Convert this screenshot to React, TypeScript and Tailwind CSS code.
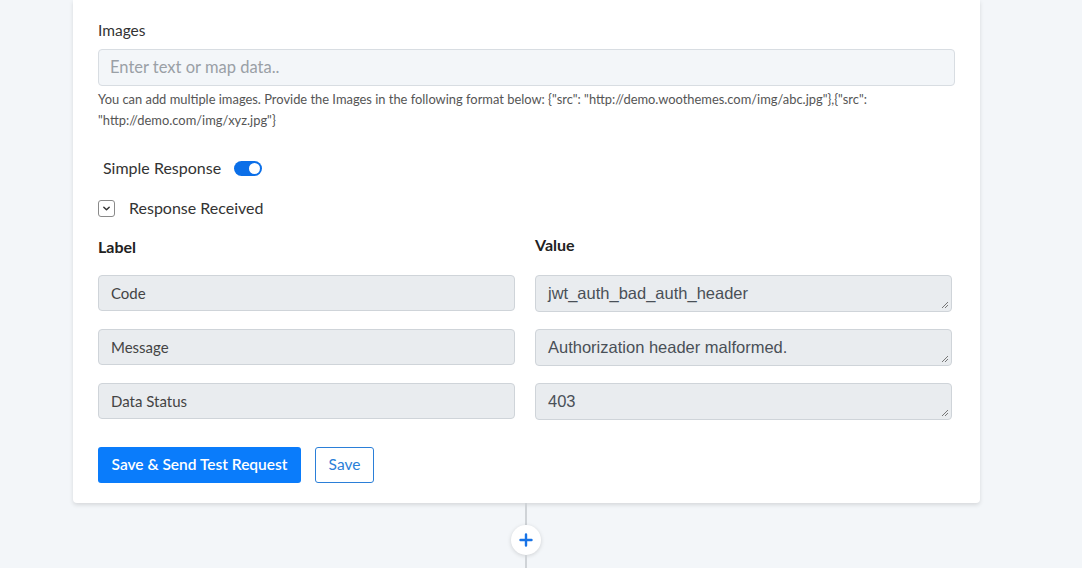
import React from "react";

const sans = { fontFamily: "Lato, 'Open Sans', sans-serif" };

function Toggle() {
  return (
    <div className="relative w-[28px] h-[15px] rounded-full bg-[#0b6fe8]">
      <div className="absolute right-[2px] top-[2px] w-[11px] h-[11px] rounded-full bg-white" />
    </div>
  );
}

function Grip() {
  return (
    <svg className="absolute right-[2px] bottom-[2px]" width="8" height="8" viewBox="0 0 8 8">
      <path d="M7 1 L1 7 M7 4 L4 7" stroke="#777" strokeWidth="1" fill="none" />
    </svg>
  );
}

const rows = [
  ["Code", "jwt_auth_bad_auth_header"],
  ["Message", "Authorization header malformed."],
  ["Data Status", "403"],
];

export default function App() {
  return (
    <div className="w-[1082px] h-[568px] bg-[#f3f6f9] overflow-hidden" style={sans}>
      <div className="ml-[73px] w-[907px] bg-white rounded-b-[4px] shadow-[0_2px_4px_rgba(0,0,0,0.12)] px-[25px] pt-[20px] pb-[20px]">
        <div className="text-[15.5px] leading-[20px] text-[#333]">Images</div>
        <div className="mt-[9px] h-[37px] w-[857px] rounded-[4px] border border-[#d8dde2] bg-[#f3f6f9] flex items-center px-[11px] text-[16.5px] text-[#9aa0a6]">
          Enter text or map data..
        </div>
        <div className="mt-[3px] text-[12.9px] leading-[21px] text-[#555] whitespace-nowrap">
          You can add multiple images. Provide the Images in the following format below: {'{"src": "http://demo.woothemes.com/img/abc.jpg"},{"src":'}
          <br />
          {'"http://demo.com/img/xyz.jpg"}'}
        </div>
        <div className="mt-[27px] ml-[5px] flex items-center h-[20px] gap-[13px]">
          <span className="text-[16px] text-[#333]">Simple Response</span>
          <Toggle />
        </div>
        <div className="mt-[20px] flex items-center h-[20px]">
          <div className="w-[17px] h-[17px] rounded-[3px] border border-[#8a8a8a] flex items-center justify-center">
            <svg width="9" height="9" viewBox="0 0 10 10">
              <path d="M2 3.5 L5 6.5 L8 3.5" stroke="#333" strokeWidth="1.6" fill="none" strokeLinecap="round" strokeLinejoin="round" />
            </svg>
          </div>
          <span className="ml-[14px] text-[16px] text-[#333]">Response Received</span>
        </div>
        <div className="mt-[17px] grid grid-cols-[417px_417px] gap-x-[20px]">
          <div className="text-[16px] font-bold text-[#222] leading-[20px] pt-[2px]">Label</div>
          <div className="text-[16px] font-bold text-[#222] leading-[20px]">Value</div>
        </div>
        <div className="mt-[18px] flex flex-col gap-[17px]">
          {rows.map(([l, v]) => (
            <div key={l} className="grid grid-cols-[417px_417px] gap-x-[20px] items-start">
              <div className="h-[36px] rounded-[4px] border border-[#cfd4d9] bg-[#e9ecef] flex items-center px-[12px] text-[15px] text-[#444]">
                {l}
              </div>
              <div
                className="relative h-[37px] rounded-[4px] border border-[#cfd4d9] bg-[#e9ecef] flex items-center px-[12px] text-[16.5px] text-[#495057]"
                style={{ fontFamily: "'Liberation Sans', Arial, sans-serif" }}
              >
                {v}
                <Grip />
              </div>
            </div>
          ))}
        </div>
        <div className="mt-[27px] flex items-center gap-[14px]">
          <button className="h-[36px] w-[203px] rounded-[3px] bg-[#0a7cfb] text-white text-[15.5px] font-semibold">
            Save &amp; Send Test Request
          </button>
          <button className="h-[36px] w-[59px] rounded-[3px] border border-[#2b7fd8] bg-white text-[#2b7fd8] text-[15.5px]">
            Save
          </button>
        </div>
      </div>
      <div className="flex flex-col items-center w-[1052px]">
        <div className="w-[2px] h-[22px] bg-[#cfd3d7]" />
        <div className="w-[30px] h-[30px] rounded-full bg-white shadow-[0_1px_4px_rgba(0,0,0,0.15)] flex items-center justify-center">
          <svg width="14" height="14" viewBox="0 0 14 14">
            <path d="M7 1.5 V12.5 M1.5 7 H12.5" stroke="#1873e6" strokeWidth="2.4" strokeLinecap="round" />
          </svg>
        </div>
        <div className="w-[2px] h-[20px] bg-[#cfd3d7]" />
      </div>
    </div>
  );
}
